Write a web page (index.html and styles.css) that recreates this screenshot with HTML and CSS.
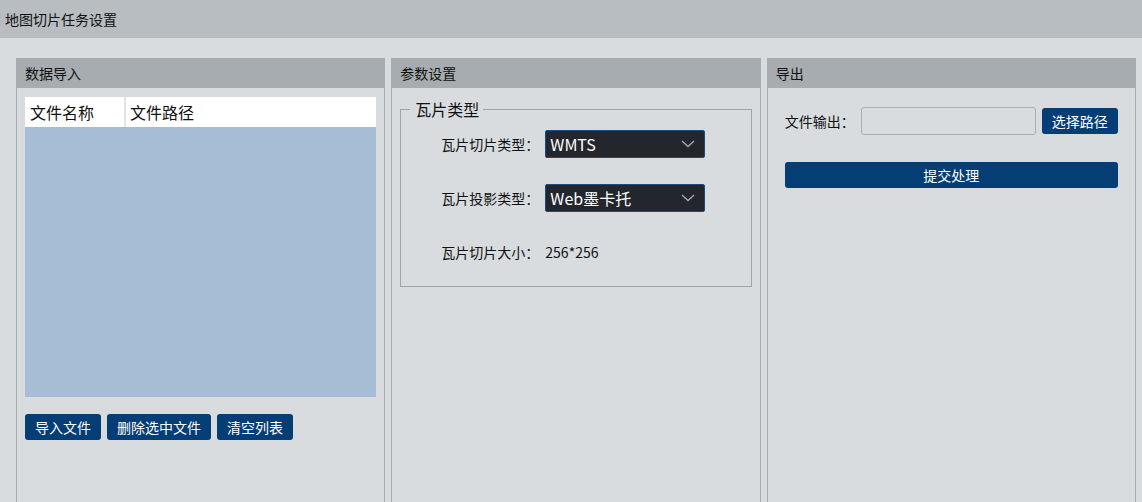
FILE: index.html
```html
<!DOCTYPE html>
<html lang="zh-CN">
<head>
  <meta charset="UTF-8" />
  <meta name="viewport" content="width=device-width, initial-scale=1.0"/>
  <title>地图切片任务设置</title>
  <link rel="stylesheet" href="styles.css">
</head>
<body>
  <div class="topbar">地图切片任务设置</div>

  <div class="main">
    <div class="panel">
      <div class="panel-head">数据导入</div>
      <div class="panel-body">
        <div class="file-table">
          <div class="file-head">
            <div class="col-name">文件名称</div>
            <div class="col-path">文件路径</div>
          </div>
          <div class="file-rows"></div>
        </div>
        <div class="btn-row">
          <button class="btn">导入文件</button>
          <button class="btn">删除选中文件</button>
          <button class="btn">清空列表</button>
        </div>
      </div>
    </div>

    <div class="panel">
      <div class="panel-head">参数设置</div>
      <div class="panel-body">
        <fieldset class="group">
          <legend>瓦片类型</legend>
          <div class="form-row">
            <label>瓦片切片类型：</label>
            <div class="select">
              <span>WMTS</span>
              <svg width="14" height="8" viewBox="0 0 14 8"><path d="M1 1 L7 6.5 L13 1" fill="none" stroke="#a9abb0" stroke-width="1.3"/></svg>
            </div>
          </div>
          <div class="form-row">
            <label>瓦片投影类型：</label>
            <div class="select">
              <span>Web墨卡托</span>
              <svg width="14" height="8" viewBox="0 0 14 8"><path d="M1 1 L7 6.5 L13 1" fill="none" stroke="#a9abb0" stroke-width="1.3"/></svg>
            </div>
          </div>
          <div class="form-row">
            <label>瓦片切片大小：</label>
            <span class="value">256*256</span>
          </div>
        </fieldset>
      </div>
    </div>

    <div class="panel">
      <div class="panel-head">导出</div>
      <div class="panel-body export">
        <div class="out-row">
          <label>文件输出：</label>
          <input type="text" class="path-input">
          <button class="btn btn-path">选择路径</button>
        </div>
        <button class="btn btn-submit">提交处理</button>
      </div>
    </div>
  </div>
</body>
</html>
```

FILE: styles.css
```css
body {
  margin: 0;
  background: #d8dcdf;
  font-family: "Noto Sans CJK SC", "Noto Sans", sans-serif;
  font-size: 14px;
  color: #111;
  overflow: hidden;
}

.topbar {
  height: 38px;
  line-height: 38px;
  padding-left: 5px;
  background: #b7bdc0;
}

.main {
  display: flex;
  gap: 6px;
  padding: 20px 6px 0 16px;
}

.panel {
  flex: 1;
  height: 480px;
  border: 1px solid #a6abae;
  border-top: none;
}

.panel-head {
  height: 30px;
  line-height: 30px;
  background: #a6acaf;
  margin: 0 -1px;
  padding-left: 9px;
}

.panel-body {
  padding: 9px 8px 0 8px;
}

/* data import */
.file-table {
  height: 300px;
  background: #a7bdd5;
}

.file-head {
  display: flex;
  height: 30px;
  line-height: 30px;
  background: white;
  font-size: 16px;
}

.col-name {
  width: 94px;
  padding-left: 5px;
  border-right: 2px solid #e2e4e6;
}

.col-path {
  padding-left: 4px;
}

.btn-row {
  display: flex;
  gap: 6px;
  margin-top: 17px;
}

.btn {
  height: 26px;
  padding: 0 10px;
  border: none;
  border-radius: 3px;
  background: #053d75;
  color: white;
  font-family: inherit;
  font-size: 14px;
  cursor: pointer;
}

/* params */
.group {
  margin: 2px 0 0 0;
  padding: 11px 0 20px 0;
  border: 1px solid #a0a4a7;
}

.group legend {
  margin-left: 9px;
  padding: 0 4px 0 5px;
  font-size: 16px;
  line-height: 20px;
}

.form-row {
  display: flex;
  align-items: center;
  height: 28px;
  margin-bottom: 26px;
}

.form-row:last-child {
  margin-bottom: 0;
}

.form-row label {
  width: 138px;
  padding-right: 6px;
  text-align: right;
}

.select {
  display: flex;
  align-items: center;
  justify-content: space-between;
  box-sizing: border-box;
  width: 160px;
  height: 28px;
  padding: 0 9px 0 4px;
  background: #24262d;
  border: 1px solid #1d4b80;
  border-radius: 2px;
  color: white;
  font-size: 16px;
}

/* export */
.export {
  padding: 19px 17px 0 17px;
}

.out-row {
  display: flex;
  align-items: center;
}

.out-row label {
  width: 76px;
}

.path-input {
  box-sizing: border-box;
  width: 175px;
  height: 28px;
  margin: 0 6px 0 0;
  border: 1px solid #a9adb0;
  border-radius: 3px;
  background: #d8dcdf;
}

.btn-path {
  width: 76px;
  padding: 0;
}

.btn-submit {
  display: block;
  width: 100%;
  margin-top: 27px;
}
```
